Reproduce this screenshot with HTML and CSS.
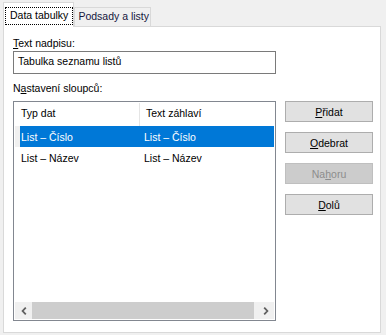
FILE: index.html
```html
<!DOCTYPE html>
<html lang="cs">
<head>
<meta charset="utf-8">
<title>Data tabulky</title>
<link rel="stylesheet" href="styles.css">
</head>
<body>
<div class="window">
  <div class="tabs">
    <div class="tab tab-active"><span class="focus">Data tabulky</span></div>
    <div class="tab">Podsady a listy</div>
  </div>
  <div class="panel">
    <div class="label"><u>T</u>ext nadpisu:</div>
    <div class="textbox">Tabulka seznamu listů</div>
    <div class="label label-cols">N<u>a</u>stavení sloupců:</div>
    <div class="content">
      <div class="listview">
        <div class="lv-row lv-header">
          <div class="c1">Typ dat</div>
          <div class="c2">Text záhlaví</div>
        </div>
        <div class="lv-row sel">
          <div class="c1">List – Číslo</div>
          <div class="c2">List – Číslo</div>
        </div>
        <div class="lv-row">
          <div class="c1">List – Název</div>
          <div class="c2">List – Název</div>
        </div>
        <div class="hscroll">
          <div class="sb-arrow">
            <svg width="6" height="8" viewBox="0 0 6 8"><path d="M4.8 0.6 L1.6 4 L4.8 7.4" fill="none" stroke="#606060" stroke-width="1.8"/></svg>
          </div>
          <div class="sb-thumb"></div>
          <div class="sb-arrow">
            <svg width="6" height="8" viewBox="0 0 6 8"><path d="M1.2 0.6 L4.4 4 L1.2 7.4" fill="none" stroke="#606060" stroke-width="1.8"/></svg>
          </div>
        </div>
      </div>
      <div class="buttons">
        <div class="btn"><u>P</u>řidat</div>
        <div class="btn"><u>O</u>debrat</div>
        <div class="btn btn-disabled">Na<u>h</u>oru</div>
        <div class="btn"><u>D</u>olů</div>
      </div>
    </div>
  </div>
</div>
</body>
</html>
```

FILE: styles.css
```css
html, body {
  margin: 0;
  padding: 0;
}
body {
  background: #f0f0f0;
  font-family: "Liberation Sans", Arial, sans-serif;
  font-size: 10.5px;
  color: #000;
  width: 386px;
  height: 335px;
  overflow: hidden;
}
u {
  text-decoration: underline;
  text-underline-offset: 1px;
}
.window {
  display: flex;
  flex-direction: column;
}
.tabs {
  display: flex;
  align-items: flex-end;
  height: 26px;
  box-sizing: border-box;
  padding: 2px 0 0 3px;
}
.tab {
  border: 1px solid #d9d9d9;
  border-bottom: none;
  background: #f0f0f0;
  padding: 2px 1px 3px 3px;
  line-height: 13px;
  color: #16163e;
  white-space: nowrap;
}
.tab-active {
  position: relative;
  z-index: 1;
  background: #fff;
  color: #000;
  padding: 4px 0 2px 1px;
  margin-bottom: -1px;
}
.focus {
  display: block;
  border: 1px dotted #000;
  padding: 1px 4px 2px 4px;
}
.panel {
  margin-left: 3px;
  width: 378px;
  height: 307px;
  box-sizing: border-box;
  border: 1px solid #d9d9d9;
  background: #fff;
  padding: 9px 7px 11px 9px;
}
.label {
  line-height: 14px;
  margin-bottom: 1px;
}
.label-cols {
  margin-top: 7px;
  margin-bottom: 6px;
}
.textbox {
  width: 263px;
  height: 23px;
  box-sizing: border-box;
  border: 1px solid #7a7a7a;
  padding: 3px 4px;
  line-height: 13px;
}
.content {
  display: flex;
  align-items: flex-start;
  gap: 9px;
}
.listview {
  width: 263px;
  height: 220px;
  box-sizing: border-box;
  border: 1px solid #828790;
  padding: 1px;
  display: flex;
  flex-direction: column;
}
.lv-row {
  display: grid;
  grid-template-columns: 119px 1fr;
  border-left: 5px solid transparent;
  line-height: 13px;
  height: 21px;
  white-space: nowrap;
}
.lv-row .c1 {
  padding: 5px 0 0 1px;
}
.lv-row .c2 {
  padding: 5px 0 0 5px;
}
.lv-header {
  height: 23px;
}
.lv-header .c1 {
  padding-top: 4px;
}
.lv-header .c2 {
  padding: 4px 0 0 6px;
  border-left: 1px solid #e5e5e5;
}
.sel {
  background: #0078d7;
  border-left-color: #f0f0f0;
  color: #fff;
}
.hscroll {
  margin-top: auto;
  height: 17px;
  display: flex;
}
.sb-arrow {
  width: 17px;
  background: #f0f0f0;
  display: flex;
  align-items: center;
  justify-content: center;
}
.sb-thumb {
  flex: 1;
  background: #cdcdcd;
  border-right: 3px solid #f0f0f0;
}
.buttons {
  width: 88px;
  display: flex;
  flex-direction: column;
  gap: 10px;
}
.btn {
  height: 21px;
  box-sizing: border-box;
  border: 1px solid #adadad;
  background: #e1e1e1;
  text-align: center;
  padding-top: 4px;
  line-height: 13px;
}
.btn-disabled {
  background: #cccccc;
  border-color: #bfbfbf;
  color: #8c8c8c;
}
```
